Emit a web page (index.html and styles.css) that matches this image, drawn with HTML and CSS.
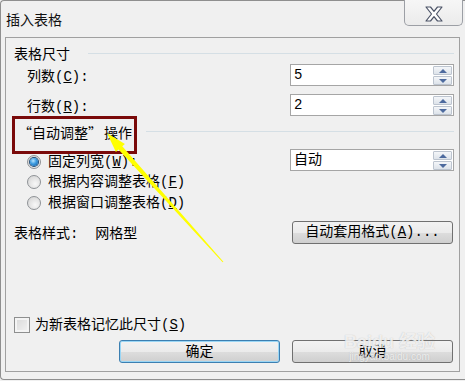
FILE: index.html
```html
<!DOCTYPE html>
<html lang="zh-CN">
<head>
<meta charset="utf-8">
<title>插入表格</title>
<link rel="stylesheet" href="styles.css">
</head>
<body>
<div class="window">
  <div class="titlebar">
    <span class="title">插入表格</span>
    <div class="close">
      <svg width="18" height="16" viewBox="0 0 18 16"><polygon points="1,1 5.5,1 9,5.3 12.5,1 17,1 11.5,8 17,15 12.5,15 9,10.7 5.5,15 1,15 6.5,8" fill="#fdfdfd" stroke="#4b5366" stroke-width="1.2" stroke-linejoin="round"/></svg>
    </div>
  </div>
  <div class="panel">
    <div class="group-head head1"><span>表格尺寸</span><span class="rule"></span></div>
    <div class="row">
      <span class="label indent">列数(<u>C</u>):</span>
      <div class="spin"><span class="val">5</span><span class="arrows"><span class="up"></span><span class="down"></span></span></div>
    </div>
    <div class="row row2">
      <span class="label indent">行数(<u>R</u>):</span>
      <div class="spin"><span class="val">2</span><span class="arrows"><span class="up"></span><span class="down"></span></span></div>
    </div>
    <div class="group-head head2"><span><span class="cjk">“</span>自动调整<span class="cjk">”</span><span class="op">操作</span></span><span class="rule"></span></div>
    <div class="row">
      <span class="label indent"><span class="radio checked"></span>固定列宽(<u>W</u>):</span>
      <div class="spin"><span class="val">自动</span><span class="arrows"><span class="up"></span><span class="down"></span></span></div>
    </div>
    <div class="row row-r"><span class="label indent"><span class="radio"></span>根据内容调整表格(<u>F</u>)</span></div>
    <div class="row row-r"><span class="label indent"><span class="radio"></span>根据窗口调整表格(<u>D</u>)</span></div>
    <div class="row row-style">
      <span class="label">表格样式:&nbsp; 网格型</span>
      <button class="btn">自动套用格式(<u>A</u>)...</button>
    </div>
    <div class="row row-check"><span class="label"><span class="check"></span>为新表格记忆此尺寸(<u>S</u>)</span></div>
    <div class="buttons">
      <button class="btn default">确定</button>
      <button class="btn">取消</button>
    </div>
  </div>
  <div class="mark-box"></div>
  <svg class="arrow" width="465" height="381" viewBox="0 0 465 381"><polygon points="107,133 124.9,143.9 122.3,146.2 223.4,261.7 222.6,262.3 118.5,149.6 115.9,151.9" fill="#ffff00"/></svg>
  <div class="watermark"><span class="wm-logo">Bai<span class="paw">du</span> 经验</span><span class="wm-url">jingyan.baidu.com</span></div>
</div>
</body>
</html>
```
FILE: styles.css
```css
html, body {
  margin: 0;
  padding: 0;
}
body {
  width: 465px;
  height: 381px;
  overflow: hidden;
  background: #f0f0f0;
  font-family: "Liberation Mono", "Noto Sans CJK SC", monospace;
  font-size: 14px;
  color: #000;
}
.cjk {
  font-family: "Noto Sans CJK SC", sans-serif;
}
.op { margin-left: 2px; }
.window {
  position: relative;
  box-sizing: border-box;
  height: 380px;
  border-top: 1px solid #8f8f8f;
  border-left: 1px solid #8f8f8f;
  border-bottom: 1px solid #8f8f8f;
  border-radius: 4px 0 0 4px;
  background: #f0f0f0;
}
.titlebar {
  height: 36px;
  display: flex;
  justify-content: space-between;
  align-items: flex-start;
}
.title {
  padding: 12px 0 0 5px;
  line-height: 16px;
  font-size: 14px;
  color: #111;
}
.close {
  box-sizing: border-box;
  width: 59px;
  height: 26px;
  margin-right: 2px;
  margin-top: -1px;
  border: 1px solid #9c9fa5;
  border-top: none;
  border-radius: 0 0 5px 5px;
  background: linear-gradient(#f6f6f6, #ebebeb);
  display: flex;
  justify-content: center;
  align-items: center;
  padding-top: 2px;
}
.panel {
  box-sizing: border-box;
  width: 455px;
  height: 335px;
  margin-left: 4px;
  border: 1px solid #a0a0a0;
  padding: 0 5px 0 8px;
  display: flex;
  flex-direction: column;
}
.group-head {
  height: 18px;
  line-height: 18px;
  display: flex;
  align-items: center;
  white-space: pre;
}
.head1 { margin-top: 8px; }
.head2 { margin-top: 8px; margin-bottom: 7px; padding-left: 4px; }
.rule {
  flex: 1;
  height: 1px;
  background: #d5dfe5;
  margin-left: 18px;
  margin-top: -4px;
}
.head2 .rule { margin-left: 14px; }
.row {
  height: 22px;
  display: flex;
  align-items: center;
  justify-content: space-between;
}
.row2 { margin-top: 8px; }
.row-r { height: 21px; }
.row-style { margin-top: 8px; }
.row-check { margin-top: auto; height: 18px; margin-bottom: 6px; }
.label {
  display: flex;
  align-items: center;
  line-height: 16px;
  padding-top: 3px;
  white-space: pre;
}
.row-r .label, .row-check .label { padding-top: 0; }
.indent { padding-left: 13px; }
u { text-decoration: underline; text-underline-offset: 1px; }
.spin {
  box-sizing: border-box;
  width: 164px;
  height: 22px;
  border: 1px solid #a5a5a5;
  background: #fff;
  display: flex;
  justify-content: space-between;
}
.val {
  padding-left: 3px;
  line-height: 20px;
  font-size: 14px;
}
.arrows {
  display: flex;
  flex-direction: column;
  gap: 1px;
  padding: 1px 1px 0 0;
}
.up, .down {
  box-sizing: border-box;
  width: 19px;
  height: 9px;
  border: 1px solid #bcc4cf;
  border-radius: 1px;
  background: linear-gradient(#f4f6f9, #dde3ea);
  display: flex;
  justify-content: center;
  align-items: center;
}
.up::after, .down::after {
  content: "";
  width: 0;
  height: 0;
  border-left: 4px solid transparent;
  border-right: 4px solid transparent;
}
.up::after { border-bottom: 4px solid #4d6a9e; }
.down::after { border-top: 4px solid #4d6a9e; }
.radio {
  box-sizing: border-box;
  width: 14px;
  height: 14px;
  border-radius: 50%;
  border: 1px solid #8e9296;
  background: radial-gradient(circle at 60% 65%, #f8f8f8 0%, #e2e2e2 55%, #cfcfcf 100%);
  margin-right: 7px;
  display: flex;
  justify-content: center;
  align-items: center;
}
.radio.checked::after {
  content: "";
  width: 8px;
  height: 8px;
  border-radius: 50%;
  background: radial-gradient(circle at 40% 35%, #b9e6ff 0%, #3b9ae0 45%, #135a9a 100%);
  box-shadow: 0 0 0 1px #1f4b75;
}
.check {
  box-sizing: border-box;
  width: 16px;
  height: 16px;
  border: 1px solid #8e8f8f;
  background: linear-gradient(135deg, #d8d8d8, #f4f4f4);
  box-shadow: inset 0 0 0 2px #f4f4f4;
  margin-right: 5px;
}
.btn {
  box-sizing: border-box;
  width: 161px;
  height: 23px;
  margin: 0 1px 0 0;
  padding: 0;
  border: 1px solid #707070;
  border-radius: 3px;
  background: linear-gradient(#f2f2f2 0%, #ebebeb 50%, #dddddd 51%, #cfcfcf 100%);
  font-family: inherit;
  font-size: 14px;
  line-height: 16px;
  color: #000;
}
.btn.default {
  border-color: #3c7fb1;
  box-shadow: inset 0 0 0 1px #9ad6f5;
}
.buttons {
  display: flex;
  justify-content: flex-end;
  gap: 11px;
  margin-bottom: 8px;
}
.mark-box {
  position: absolute;
  left: 11px;
  top: 115px;
  width: 125px;
  height: 38px;
  box-sizing: border-box;
  border: 3px solid #7a0a0a;
}
.arrow {
  position: absolute;
  left: -1px;
  top: -1px;
}
.watermark {
  position: absolute;
  left: 343px;
  top: 331px;
  display: flex;
  flex-direction: column;
  align-items: center;
  color: rgba(255, 255, 255, 0.75);
  text-shadow: 0 0 1px rgba(150, 150, 150, 0.6);
  pointer-events: none;
}
.wm-logo {
  font-family: "Liberation Sans", "Noto Sans CJK SC", sans-serif;
  font-weight: bold;
  font-size: 18px;
  line-height: 20px;
}
.wm-url {
  font-family: "Liberation Sans", sans-serif;
  font-size: 10px;
  line-height: 10px;
}
```
